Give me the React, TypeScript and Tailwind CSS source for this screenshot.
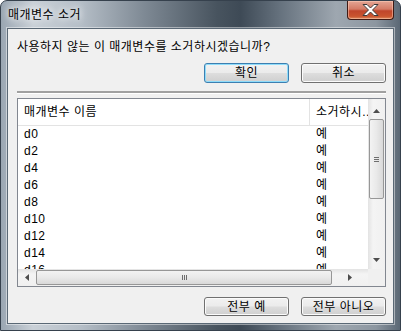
import React from 'react';

const rows = ['d0', 'd2', 'd4', 'd6', 'd8', 'd10', 'd12', 'd14', 'd16'];

const font = "font-['Liberation_Sans','Noto_Sans_CJK_KR',sans-serif]";

const btnBase =
  'h-full w-[85px] rounded-[3px] border text-[12px] leading-none text-black flex items-center justify-center bg-[linear-gradient(180deg,#f2f2f2_0%,#ebebeb_48%,#dddddd_52%,#cfcfcf_100%)]';

const WinButton = ({ label, isDefault }: { label: string; isDefault?: boolean }) => (
  <div
    className={
      isDefault
        ? `${btnBase} border-[#3c7fb1] shadow-[inset_0_0_0_1px_#8fdcfa]`
        : `${btnBase} border-[#707070] shadow-[inset_0_0_0_1px_#fbfbfb]`
    }
  >
    {label}
  </div>
);

const Arrow = ({ dir }: { dir: 'up' | 'down' | 'left' | 'right' }) => {
  const pts = {
    up: '0,4 7,4 3.5,0',
    down: '0,0 7,0 3.5,4',
    left: '4,0 4,7 0,3.5',
    right: '0,0 0,7 4,3.5',
  }[dir];
  const vertical = dir === 'up' || dir === 'down';
  return (
    <svg width={vertical ? 7 : 4} height={vertical ? 4 : 7} viewBox={vertical ? '0 0 7 4' : '0 0 4 7'}>
      <polygon points={pts} fill="#4d4d4d" />
    </svg>
  );
};

export default function App() {
  return (
    <div
      className={`${font} tracking-[0.5px] w-[401px] h-[331px] flex flex-col overflow-hidden rounded-t-[7px] border border-[#36414d] bg-[linear-gradient(90deg,#9aa6b2_0%,#c9d0d7_8%,#b5bec7_20%,#7e8994_36%,#48545f_54%,#3e4a56_60%,#66727e_70%,#9ea7b0_84%,#8c96a0_94%,#5b6875_100%)]`}
    >
      {/* Title bar */}
      <div className="h-[27px] flex items-start justify-between">
        <div className="pl-[7px] pt-[7px] text-[12px] leading-[14px] text-black [text-shadow:0_0_6px_#ffffff,0_0_10px_#ffffff]">
          매개변수 소거
        </div>
        <div className="mr-[6px] w-[47px] h-[19px] rounded-b-[4px] border border-t-0 border-[#3f1a14] flex items-center justify-center bg-[linear-gradient(180deg,#e4a594_0%,#d47b66_45%,#c0452b_55%,#c9542f_85%,#dc8a5d_100%)] shadow-[inset_0_0_0_1px_rgba(255,210,190,0.5)]">
          <svg width="17" height="12" viewBox="0 0 17 12">
            <polygon
              points="1,0.5 5,0.5 8.5,4 12,0.5 16,0.5 10.5,6 16,11.5 12,11.5 8.5,8 5,11.5 1,11.5 6.5,6"
              fill="#ffffff"
              stroke="#3a3a3a"
              strokeWidth="1"
              strokeLinejoin="round"
            />
          </svg>
        </div>
      </div>

      {/* Client area */}
      <div className="mx-[6px] h-[296px] border border-[#5a6875] bg-[#f0f0f0] shadow-[0_0_0_1px_rgba(255,255,255,0.45)] pl-[9px] pr-[7px] pt-[10px] pb-[7px] flex flex-col">
        <div className="h-[16px] text-[12px] leading-[16px] text-black whitespace-nowrap">
          사용하지 않는 이 매개변수를 소거하시겠습니까?
        </div>

        <div className="mt-[8px] h-[20px] flex justify-end gap-[12px]">
          <WinButton label="확인" isDefault />
          <WinButton label="취소" />
        </div>

        {/* Separator */}
        <div className="mt-[8px] h-[2px] bg-[#a0a0a0]" />
        <div className="h-px bg-white" />

        {/* List view */}
        <div className="mt-[4px] h-[189px] border border-[#828790] bg-white flex flex-col">
          <div className="h-[170px] flex">
            <div className="flex-1 flex flex-col overflow-hidden">
              <div className="h-[27px] shrink-0 flex border-b border-[#e3e3e3] text-[12px] text-black">
                <div className="w-[292px] border-r border-[#e3e3e3] pl-[6px] flex items-center">매개변수 이름</div>
                <div className="flex-1 pl-[6px] flex items-center whitespace-nowrap overflow-hidden">소거하시...</div>
              </div>
              <div className="flex-1 overflow-hidden">
                {rows.map((r) => (
                  <div key={r} className="h-[17px] flex text-[12px] leading-[17px] text-black">
                    <div className="w-[292px] pl-[6px]">{r}</div>
                    <div className="pl-[6px]">예</div>
                  </div>
                ))}
              </div>
            </div>

            {/* Vertical scrollbar */}
            <div className="w-[17px] flex flex-col bg-[linear-gradient(90deg,#e3e3e3_0%,#f4f4f4_30%,#f0f0f0_100%)]">
              <div className="h-[20px] flex items-end justify-center pb-[6px]">
                <Arrow dir="up" />
              </div>
              <div className="mx-[1px] h-[80px] rounded-[2px] border border-[#979797] bg-[linear-gradient(90deg,#f3f3f3_0%,#e9e9e9_50%,#d9d9d9_100%)] flex items-center justify-center">
                <div className="flex flex-col gap-[1px]">
                  <div className="w-[5px] h-px bg-[#6e6e6e]" />
                  <div className="w-[5px] h-px bg-[#6e6e6e]" />
                  <div className="w-[5px] h-px bg-[#6e6e6e]" />
                </div>
              </div>
              <div className="flex-1" />
              <div className="h-[19px] flex items-center justify-center">
                <Arrow dir="down" />
              </div>
            </div>
          </div>

          {/* Horizontal scrollbar */}
          <div className="h-[17px] flex">
            <div className="flex-1 flex items-center bg-[linear-gradient(180deg,#e3e3e3_0%,#f4f4f4_30%,#f0f0f0_100%)]">
              <div className="w-[18px] flex justify-center">
                <Arrow dir="left" />
              </div>
              <div className="w-[296px] h-[15px] rounded-[2px] border border-[#979797] bg-[linear-gradient(180deg,#f3f3f3_0%,#e9e9e9_50%,#d9d9d9_100%)] flex items-center justify-center">
                <div className="flex gap-[1px]">
                  <div className="w-px h-[5px] bg-[#6e6e6e]" />
                  <div className="w-px h-[5px] bg-[#6e6e6e]" />
                  <div className="w-px h-[5px] bg-[#6e6e6e]" />
                </div>
              </div>
              <div className="flex-1 flex justify-center">
                <Arrow dir="right" />
              </div>
            </div>
            <div className="w-[17px] bg-[#f0f0f0]" />
          </div>
        </div>

        <div className="mt-[10px] h-[19px] flex justify-end gap-[12px]">
          <WinButton label="전부 예" />
          <WinButton label="전부 아니오" />
        </div>
      </div>
    </div>
  );
}
